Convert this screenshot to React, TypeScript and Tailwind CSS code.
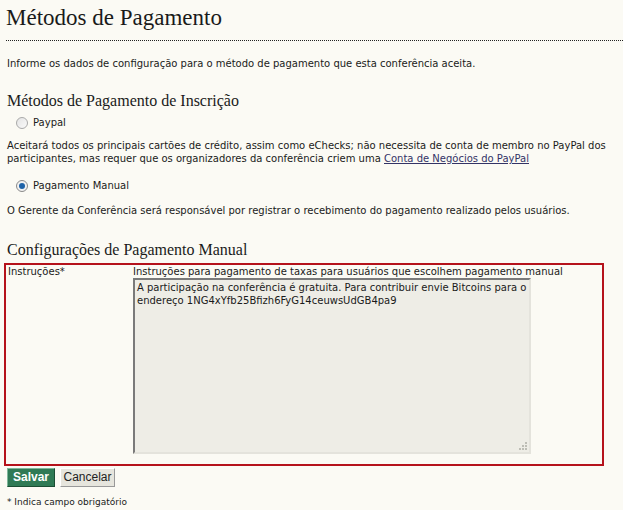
export default function App() {
  const body = "font-['Verdana','DejaVu_Sans',sans-serif] text-[10px] leading-[13px] text-[#1a1a1a]";
  const serif = "font-['Georgia','Liberation_Serif',serif] text-[#1a1a1a]";
  return (
    <div className={`min-h-[510px] w-[623px] bg-[#fbfaf4] ${body}`}>
      <div className="pl-[6px] pt-[5px]">
        <h1 className={`${serif} text-[23px] leading-[26px]`}>Métodos de Pagamento</h1>
      </div>
      <div className="ml-[6px] mt-[9px] border-b border-dotted border-[#222]" />

      <p className="ml-[7px] mt-[16px]">
        Informe os dados de configuração para o método de pagamento que esta conferência aceita.
      </p>

      <h2 className={`${serif} ml-[7px] mt-[22px] text-[16px] leading-[18px]`}>
        Métodos de Pagamento de Inscrição
      </h2>

      <label className="ml-[16px] mt-[6px] flex items-center gap-[5px]">
        <span className="h-[12px] w-[12px] rounded-full border border-[#a9a9a9] bg-gradient-to-br from-[#e4e4e4] to-[#fafafa]" />
        <span>Paypal</span>
      </label>

      <p className="ml-[7px] mt-[10px]">
        Aceitará todos os principais cartões de crédito, assim como eChecks; não necessita de conta de membro no PayPal dos participantes, mas requer que os organizadores da conferência criem uma{" "}
        <a className="text-[#333366] underline">Conta de Negócios do PayPal</a>
      </p>

      <label className="ml-[16px] mt-[14px] flex items-center gap-[5px]">
        <span className="flex h-[12px] w-[12px] items-center justify-center rounded-full border border-[#8a8a8a] bg-[#f2f2f2]">
          <span className="h-[6px] w-[6px] rounded-full bg-[#1f63a8]" />
        </span>
        <span>Pagamento Manual</span>
      </label>

      <p className="ml-[7px] mt-[12px]">
        O Gerente da Conferência será responsável por registrar o recebimento do pagamento realizado pelos usuários.
      </p>

      <h2 className={`${serif} ml-[7px] mt-[24px] text-[16px] leading-[18px]`}>
        Configurações de Pagamento Manual
      </h2>

      <div className="ml-[4px] mt-[4px] flex h-[203px] w-[600px] border-2 border-[#b5121b] pl-[2px]">
        <div className="w-[125px] shrink-0">Instruções*</div>
        <div className="flex flex-col">
          <div>Instruções para pagamento de taxas para usuários que escolhem pagamento manual</div>
          <div className="relative h-[176px] w-[398px] border-2 border-b-[#e4e3dc] border-l-[#7a7a7a] border-r-[#e4e3dc] border-t-[#7a7a7a] bg-[#eeede6] px-[2px] py-[1px]">
            A participação na conferência é gratuita. Para contribuir envie Bitcoins para o endereço 1NG4xYfb25Bfizh6FyG14ceuwsUdGB4pa9
            <svg className="absolute bottom-[1px] right-[1px]" width="11" height="11" viewBox="0 0 11 11">
              <g fill="#bdbdb5">
                <rect x="8" y="2" width="2" height="2" />
                <rect x="5" y="5" width="2" height="2" />
                <rect x="8" y="5" width="2" height="2" />
                <rect x="2" y="8" width="2" height="2" />
                <rect x="5" y="8" width="2" height="2" />
                <rect x="8" y="8" width="2" height="2" />
              </g>
            </svg>
          </div>
        </div>
      </div>

      <div className="ml-[7px] mt-[2px] flex gap-[5px] font-['Arial','Liberation_Sans',sans-serif] text-[12px]">
        <button className="h-[19px] w-[48px] border border-b-[#1a4d33] border-l-[#7fb79a] border-r-[#1a4d33] border-t-[#7fb79a] bg-[#2f7a55] font-bold leading-[17px] text-white">
          Salvar
        </button>
        <button className="h-[19px] w-[55px] border border-b-[#999] border-l-[#fff] border-r-[#999] border-t-[#fff] bg-[#e6e5dd] leading-[17px] text-[#222]">
          Cancelar
        </button>
      </div>

      <p className="ml-[7px] mt-[10px] text-[9px] leading-[11px]">* Indica campo obrigatório</p>
    </div>
  );
}
